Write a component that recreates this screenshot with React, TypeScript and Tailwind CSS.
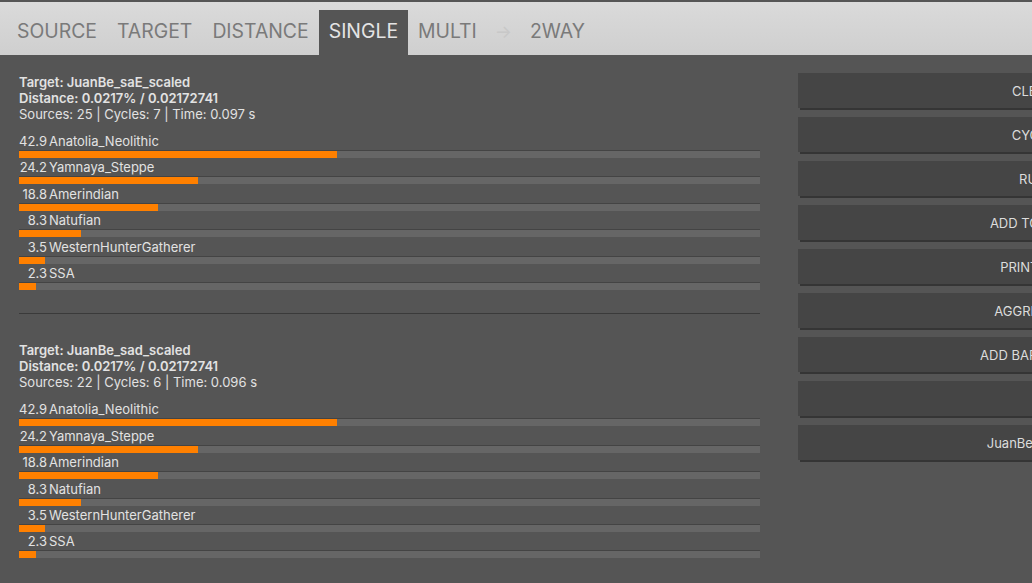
import React from 'react';

interface Row {
	value: number;
	name: string;
}

interface Result {
	target: string;
	distance: string;
	sources: number;
	cycles: number;
	time: string;
	rows: Row[];
}

const rows: Row[] = [
	{ value: 42.9, name: 'Anatolia_Neolithic' },
	{ value: 24.2, name: 'Yamnaya_Steppe' },
	{ value: 18.8, name: 'Amerindian' },
	{ value: 8.3, name: 'Natufian' },
	{ value: 3.5, name: 'WesternHunterGatherer' },
	{ value: 2.3, name: 'SSA' },
];

const results: Result[] = [
	{
		target: 'JuanBe_saE_scaled',
		distance: '0.0217% / 0.02172741',
		sources: 25,
		cycles: 7,
		time: '0.097',
		rows,
	},
	{
		target: 'JuanBe_sad_scaled',
		distance: '0.0217% / 0.02172741',
		sources: 22,
		cycles: 6,
		time: '0.096',
		rows,
	},
];

const tabs = ['SOURCE', 'TARGET', 'DISTANCE', 'SINGLE', 'MULTI'];
const buttons = ['CLEAR', 'CYCLE', 'RUN', 'ADD TO PLOT', 'PRINT ALL', 'AGGREGATE', 'ADD BAR CHART', '', 'JuanBe_scaled'];

const ResultBlock = ({ r }: { r: Result }) => (
	<div className="pt-[19px]">
		<div className="text-[13px] leading-[16px] text-[#e2e2e2]">
			<div className="font-semibold">Target: {r.target}</div>
			<div className="font-semibold">Distance: {r.distance}</div>
			<div>
				Sources: {r.sources} | Cycles: {r.cycles} | Time: {r.time} s
			</div>
		</div>
		<div className="mt-[11px]">
			{r.rows.map((row) => (
				<div key={row.name} className="h-[26.4px]">
					<div className="flex text-[13px] leading-[17px] text-[#e2e2e2]">
						<span className="w-[28px] text-right">{row.value}</span>
						<span className="ml-[2px]">{row.name}</span>
					</div>
					<div className="h-[8px] border-t border-[#444] bg-[#666]">
						<div className="h-full bg-[#ff8000]" style={{ width: `${row.value}%` }} />
					</div>
				</div>
			))}
		</div>
	</div>
);

const App = () => {
	return (
		<div
			className="w-[1032px] h-[583px] overflow-hidden bg-[#555] text-[#ddd]"
			style={{ fontFamily: 'Inter, "Open Sans", sans-serif' }}
		>
			<div className="h-[2px] bg-[#555]" />
			<div className="h-[53px] bg-gradient-to-b from-[#dadada] to-[#cfcfcf] flex items-end pl-[7px]">
				{tabs.map((t) => (
					<div
						key={t}
						className={
							t === 'SINGLE'
								? 'h-[45px] px-[10px] pb-[2px] flex items-center bg-[#555] text-[#e4e4e4] text-[19.4px]'
								: 'h-[45px] px-[10px] pb-[2px] flex items-center text-[#7a7a7a] text-[19.4px]'
						}
					>
						{t}
					</div>
				))}
				<div className="h-[45px] px-[8px] pb-[2px] flex items-center text-[#c8c8c8] text-[18px]">→</div>
				<div className="h-[45px] px-[10px] pb-[2px] flex items-center text-[#7a7a7a] text-[19.4px]">2WAY</div>
			</div>
			<div className="flex">
				<div className="w-[741px] ml-[19px] shrink-0">
					<ResultBlock r={results[0]} />
					<div className="mt-[22px] border-t border-[#3a3a3a]" />
					<div className="pt-[9px]">
						<ResultBlock r={results[1]} />
					</div>
				</div>
				<div className="ml-[38px] w-[470px] shrink-0 pt-[18px] flex flex-col gap-[9px]">
					{buttons.map((b, i) => (
						<div
							key={i}
							className="h-[35px] bg-[#454545] shadow-[2px_2px_0_#353535] flex items-center justify-center pt-[2px] text-[13px] text-[#dcdcdc]"
						>
							{b}
						</div>
					))}
				</div>
			</div>
		</div>
	);
};

export default App;
